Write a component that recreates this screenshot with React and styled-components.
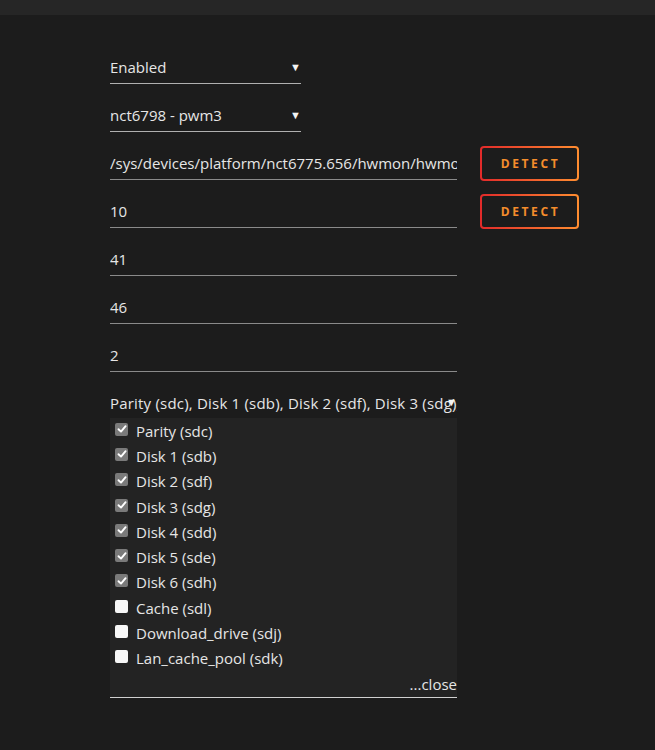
import React from "react";
import styled, { createGlobalStyle } from "styled-components";

const Global = createGlobalStyle`
  html, body { margin: 0; padding: 0; background: #1c1c1c; }
  body { font-family: "Open Sans", "Noto Sans", sans-serif; color: #e4e4e4; }
  * { box-sizing: border-box; }
`;

const Page = styled.div`
  min-height: 750px;
  background: #1c1c1c;
`;

const TopBar = styled.div`
  height: 15px;
  background: #262626;
`;

const Form = styled.div`
  display: flex;
  flex-direction: column;
  gap: 16px;
  padding: 37px 0 0 110px;
`;

const Row = styled.div`
  display: flex;
  align-items: center;
  gap: 23px;
  height: ${(p) => (p.$auto ? "auto" : "32px")};
`;

const Field = styled.div`
  position: relative;
  width: ${(p) => p.$w}px;
  height: 32px;
  display: flex;
  align-items: center;
  font-size: 15px;
  line-height: 20px;
  color: #e6e6e6;
  border-bottom: 1px solid ${(p) => p.$line || "#8a8a8a"};
  overflow: hidden;
  white-space: nowrap;
  padding-bottom: 2px;
`;

const Arrow = styled.span`
  position: absolute;
  right: ${(p) => p.$r || 0}px;
  top: 50%;
  transform: translateY(-62%);
  font-size: 11px;
  line-height: 11px;
  color: #f4f4f4;
  letter-spacing: 0;
`;

const Detect = styled.button`
  width: 99px;
  height: 35px;
  flex-shrink: 0;
  margin-top: -2px;
  border: 2px solid transparent;
  border-radius: 4px;
  background: linear-gradient(#1c1c1c, #1c1c1c) padding-box,
    linear-gradient(90deg, #e22a2a, #ff8d30) border-box;
  color: #f48d2c;
  font-family: "Open Sans", sans-serif;
  font-weight: 700;
  font-size: 12px;
  letter-spacing: 2.6px;
  padding: 0 0 0 2px;
  cursor: pointer;
`;

const Multi = styled.div`
  width: 347px;
  display: flex;
  flex-direction: column;
`;

const MultiHead = styled.div`
  position: relative;
  height: 30px;
  display: flex;
  align-items: center;
  font-size: 15px;
  letter-spacing: 0.2px;
  color: #e6e6e6;
  white-space: nowrap;
  overflow: hidden;
`;

const List = styled.div`
  background: #232323;
  border-bottom: 1px solid #d0d0d0;
  display: flex;
  flex-direction: column;
`;

const Item = styled.label`
  height: 25.3px;
  display: flex;
  align-items: center;
  gap: 8px;
  padding-left: 5px;
  font-size: 15px;
  color: #e6e6e6;
`;

const Box = styled.span`
  width: 13px;
  height: 13px;
  border-radius: 2px;
  background: ${(p) => (p.$on ? "#7a7a7a" : "#f8f8f8")};
  display: flex;
  align-items: center;
  justify-content: center;
  flex-shrink: 0;
  margin-top: -3px;
`;

const Close = styled.div`
  height: 26px;
  display: flex;
  align-items: center;
  justify-content: flex-end;
  font-size: 15px;
  color: #e6e6e6;
`;

const Check = () => (
  <svg width="10" height="10" viewBox="0 0 10 10">
    <path d="M1.5 5.2 L4 7.6 L8.6 2.2" fill="none" stroke="#fff" strokeWidth="1.9" strokeLinecap="round" strokeLinejoin="round" />
  </svg>
);

const disks = [
  ["Parity (sdc)", true],
  ["Disk 1 (sdb)", true],
  ["Disk 2 (sdf)", true],
  ["Disk 3 (sdg)", true],
  ["Disk 4 (sdd)", true],
  ["Disk 5 (sde)", true],
  ["Disk 6 (sdh)", true],
  ["Cache (sdl)", false],
  ["Download_drive (sdj)", false],
  ["Lan_cache_pool (sdk)", false],
];

export default function App() {
  return (
    <Page>
      <Global />
      <TopBar />
      <Form>
        <Row>
          <Field $w={191} $line="#b0b0b0">
            Enabled
            <Arrow>▼</Arrow>
          </Field>
        </Row>
        <Row>
          <Field $w={191} $line="#b0b0b0">
            nct6798 - pwm3
            <Arrow>▼</Arrow>
          </Field>
        </Row>
        <Row>
          <Field $w={347}>/sys/devices/platform/nct6775.656/hwmon/hwmon4/pwm3</Field>
          <Detect>DETECT</Detect>
        </Row>
        <Row>
          <Field $w={347}>10</Field>
          <Detect>DETECT</Detect>
        </Row>
        <Row>
          <Field $w={347}>41</Field>
        </Row>
        <Row>
          <Field $w={347}>46</Field>
        </Row>
        <Row>
          <Field $w={347}>2</Field>
        </Row>
        <Row $auto>
          <Multi>
            <MultiHead>
              Parity (sdc), Disk 1 (sdb), Disk 2 (sdf), Disk 3 (sdg), Disk 4 (sdd)
              <Arrow $r={0}>▼</Arrow>
            </MultiHead>
            <List>
              {disks.map(([name, on]) => (
                <Item key={name}>
                  <Box $on={on}>{on && <Check />}</Box>
                  {name}
                </Item>
              ))}
              <Close>...close</Close>
            </List>
          </Multi>
        </Row>
      </Form>
    </Page>
  );
}
